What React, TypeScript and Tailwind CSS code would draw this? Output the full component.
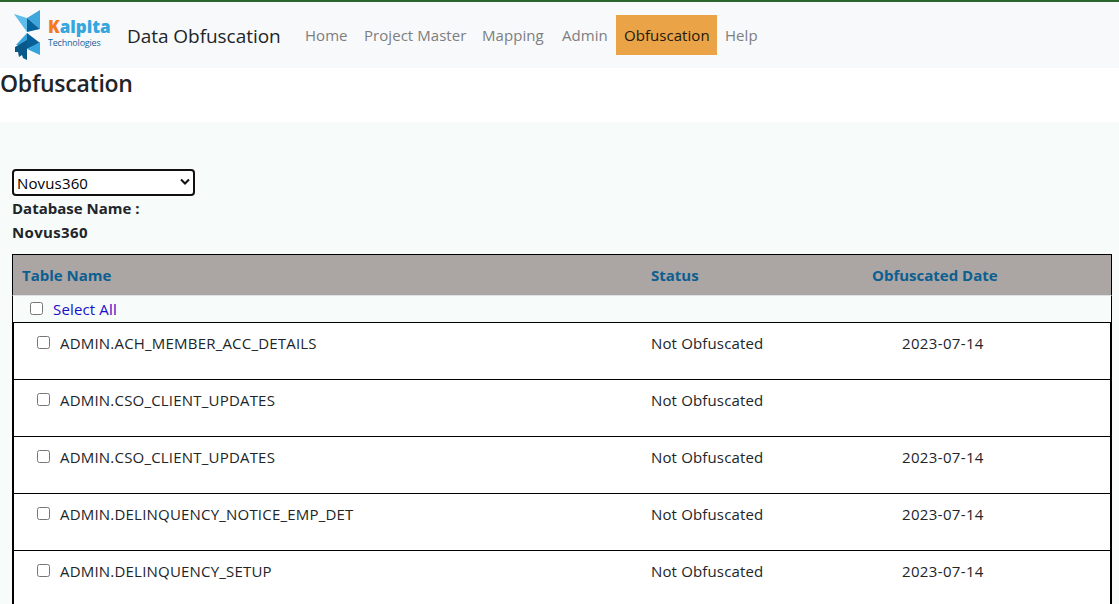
import React from "react";

const rows = [
  { name: "ADMIN.ACH_MEMBER_ACC_DETAILS", date: "2023-07-14" },
  { name: "ADMIN.CSO_CLIENT_UPDATES", date: "" },
  { name: "ADMIN.CSO_CLIENT_UPDATES", date: "2023-07-14" },
  { name: "ADMIN.DELINQUENCY_NOTICE_EMP_DET", date: "2023-07-14" },
  { name: "ADMIN.DELINQUENCY_SETUP", date: "2023-07-14" },
];

const navItems = [
  { label: "Home", width: "w-[59px]" },
  { label: "Project Master", width: "w-[118px]" },
  { label: "Mapping", width: "w-[80px]" },
  { label: "Admin", width: "w-[62px]" },
  { label: "Obfuscation", width: "w-[101px]", active: true },
  { label: "Help", width: "w-[49px]" },
];

function Checkbox({ label }: { label: string }) {
  return (
    <input
      type="checkbox"
      aria-label={label}
      className="block size-[13px] shrink-0 appearance-none rounded-[2.5px] border border-[#767676] bg-white checked:bg-blue-600"
    />
  );
}

function Logo() {
  return (
    <a className="flex h-[52px] w-[99px] shrink-0" href="#" aria-label="Kalpita Technologies">
      <svg className="h-[52px] w-[28px] shrink-0" viewBox="0 0 28 52">
        <path d="M0 5 13 9V23Z" fill="#5fbdea" />
        <path d="M13 9 26 1V20Z" fill="#3fa6dd" />
        <path d="M13 9 26 20 13 23Z" fill="#06639b" />
        <path d="M13 24 26 34 13 40Z" fill="#075f98" />
        <path d="M26 33V46L13 40Z" fill="#35a3dc" />
        <path d="M13 24V36L2 36Z" fill="#35a3dc" />
        <path d="M1 38 13 31V51L9 49 8 46 5 48 4 43 1 43Z" fill="#095887" />
      </svg>
      <span className="ml-[6px] flex flex-col pt-[7px]">
        <span className="h-[21px] whitespace-nowrap font-['Open_Sans',sans-serif] text-[17px] font-extrabold leading-[22px] text-[#36a6de]">
          <span className="text-[#f47a20]">K</span>alpita
        </span>
        <span className="whitespace-nowrap font-['Open_Sans',sans-serif] text-[9px] leading-[11px] tracking-[-0.2px] text-[#17659a]">
          Technologies
        </span>
      </span>
    </a>
  );
}

export default function App() {
  return (
    <div className="h-[604px] w-full overflow-hidden bg-white font-['Open_Sans','Noto_Sans',sans-serif] text-[15px] leading-6 text-[#212529]">
      <nav className="flex h-[68px] items-center border-t-2 border-[#2b662f] bg-[#f8f9fb] pl-[14px]">
        <Logo />
        <a className="ml-[14px] w-[170px] shrink-0 whitespace-nowrap pt-px text-[19px] leading-[26px] tracking-[-0.05px] text-[#212529]" href="#">
          Data Obfuscation
        </a>
        <ul className="flex">
          {navItems.map((item) => (
            <li
              key={item.label}
              className={`${item.width} ${
                item.active ? "bg-[#eaa347] text-[#24190b]" : "text-[#7d7e7f]"
              } h-10 whitespace-nowrap px-2 py-2 tracking-[0.05px]`}
            >
              {item.label}
            </li>
          ))}
        </ul>
      </nav>
      <h1 className="h-[54px] text-[23px] font-semibold leading-[31px] tracking-[-0.25px]">Obfuscation</h1>
      <main className="h-[482px] bg-[#f7fbfa] pl-3 pt-[47px]">
        <div className="relative h-[27px] w-[183px]">
          <select
            aria-label="Database"
            className="block h-full w-full appearance-none rounded-[4px] border-2 border-[#101010] bg-white pl-[3px] text-[15px] tracking-[0.15px] text-black"
          >
            <option>Novus360</option>
          </select>
          <svg className="pointer-events-none absolute right-[4px] top-[9px] h-[8px] w-[12px]" viewBox="0 0 12 8">
            <path d="M2 1.500 6 5.500 10 1.500" fill="none" stroke="#101010" strokeWidth="2" />
          </svg>
        </div>
        <p className="font-bold">Database Name :</p>
        <p className="font-bold tracking-[0.35px]">Novus360</p>

        <section className="mt-[10px] w-[1100px]">
          <header className="flex h-[41px] border border-b-0 border-black bg-[#aba5a4] pl-[9px] pt-[8px] font-bold text-[#0b5f91]">
            <span className="w-[629px]">Table Name</span>
            <span className="w-[221px]">Status</span>
            <span>Obfuscated Date</span>
          </header>
          <div className="flex h-[27px] border-x border-t border-x-black border-t-[#dee2e6] pl-[17px] pt-[6px]">
            <Checkbox label="Select all" />
            <span className="-mt-[5px] ml-[10px] tracking-[0.15px] text-[#1a0dcc]">Select All</span>
          </div>
          {rows.map((row, index) => (
            <div
              key={index}
              className="flex h-[57px] border-x-2 border-t border-black bg-white pl-[23px] pt-[8px]"
            >
              <div className="flex w-[614px] pt-[5px]">
                <Checkbox label={row.name} />
                <span className="-mt-[5px] ml-[10px] whitespace-nowrap tracking-[0.2px]">{row.name}</span>
              </div>
              <span className="w-[251px] tracking-[0.15px]">Not Obfuscated</span>
              <span className="tracking-[0.35px]">{row.date}</span>
            </div>
          ))}
        </section>
      </main>
    </div>
  );
}
